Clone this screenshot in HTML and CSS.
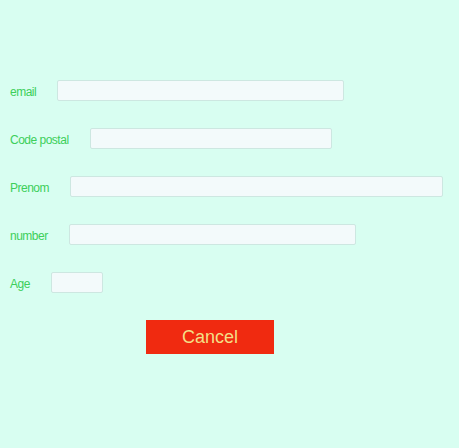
FILE: index.html
```html
<!DOCTYPE html>
<html>
<head>
<meta charset="utf-8">
<link rel="stylesheet" href="styles.css">
</head>
<body>
<form class="form">
  <div class="row"><label class="label">email</label><input class="field w-email" type="text"></div>
  <div class="row"><label class="label">Code postal</label><input class="field w-code" type="text"></div>
  <div class="row"><label class="label">Prenom</label><input class="field w-prenom" type="text"></div>
  <div class="row"><label class="label">number</label><input class="field w-number" type="text"></div>
  <div class="row"><label class="label">Age</label><input class="field w-age" type="text"></div>
  <div class="actions"><button type="button" class="cancel">Cancel</button></div>
</form>
</body>
</html>
```
FILE: styles.css
```css
html, body {
  margin: 0;
  padding: 0;
  background: #d8fef1;
  height: 100%;
}
.form {
  padding: 80px 0 0 10px;
  display: flex;
  flex-direction: column;
  gap: 27px;
  font-family: "Liberation Sans", Arial, sans-serif;
}
.row {
  display: flex;
  align-items: center;
  gap: 21px;
  height: 21px;
}
.label {
  font-size: 12px;
  letter-spacing: -0.5px;
  color: #3ccf5a;
  line-height: 14px;
  padding-top: 2px;
}
.field {
  box-sizing: border-box;
  height: 21px;
  margin: 0;
  padding: 0 4px;
  background: #f3fafb;
  border: 1px solid #cde7e1;
  border-radius: 2px;
  outline: none;
}
.w-email { width: 287px; }
.w-code { width: 242px; }
.w-prenom { width: 373px; }
.w-number { width: 287px; }
.w-age { width: 52px; }
.actions {
  display: flex;
  padding-left: 136px;
}
.cancel {
  width: 128px;
  height: 34px;
  margin: 0;
  padding: 0;
  border: none;
  background: #f02a10;
  color: #f4df86;
  font-family: "Liberation Sans", Arial, sans-serif;
  font-size: 18px;
}
```
